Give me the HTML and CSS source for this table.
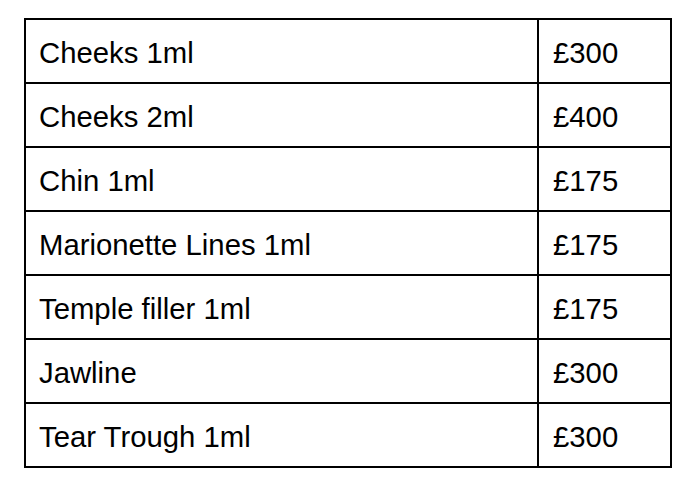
FILE: index.html
```html
<!DOCTYPE html>
<html lang="en">
<head>
<meta charset="utf-8">
<title>Filler prices</title>
<link rel="stylesheet" href="styles.css">
</head>
<body>
<table class="prices">
  <tbody>
    <tr><td class="name">Cheeks 1ml</td><td class="price">£300</td></tr>
    <tr><td class="name">Cheeks 2ml</td><td class="price">£400</td></tr>
    <tr><td class="name">Chin 1ml</td><td class="price">£175</td></tr>
    <tr><td class="name">Marionette Lines 1ml</td><td class="price">£175</td></tr>
    <tr><td class="name">Temple filler 1ml</td><td class="price">£175</td></tr>
    <tr><td class="name">Jawline</td><td class="price">£300</td></tr>
    <tr><td class="name">Tear Trough 1ml</td><td class="price">£300</td></tr>
  </tbody>
</table>
</body>
</html>
```

FILE: styles.css
```css
html, body {
  margin: 0;
  padding: 0;
  background: #ffffff;
}

body {
  padding: 18px 0 0 24px;
  font-family: "Liberation Sans", Arial, Helvetica, sans-serif;
  color: #000000;
}

.prices {
  border-collapse: separate;
  border-spacing: 0;
  border-top: 2px solid #000;
  border-left: 2px solid #000;
  width: 648px;
  table-layout: fixed;
}

.prices td {
  border-right: 2px solid #000;
  border-bottom: 2px solid #000;
  font-size: 29.3px;
  line-height: 34px;
  padding: 16px 12px 12px 13px;
  vertical-align: top;
  white-space: nowrap;
}

.prices .name {
  width: 486px;
}

.prices .price {
  padding-left: 14px;
}
```
